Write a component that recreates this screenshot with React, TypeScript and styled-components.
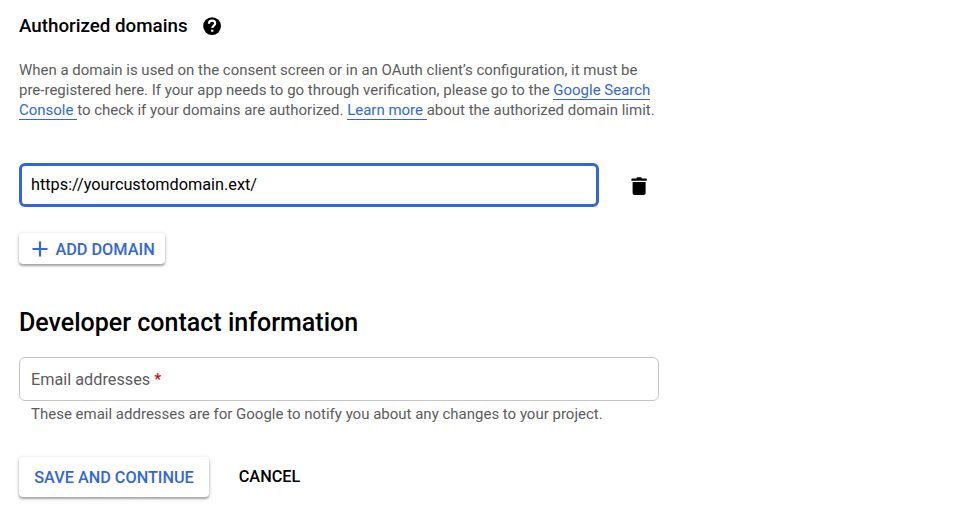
import React from "react";
import styled, { createGlobalStyle } from "styled-components";

const GlobalStyle = createGlobalStyle`
  * { box-sizing: border-box; }
  body { margin: 0; background: #fff; font-family: Roboto, sans-serif; color: #000; }
`;

const Page = styled.main`
  width: 958px;
  height: 518px;
  padding: 14px 19px 0;
  display: flex;
  flex-direction: column;
  align-items: flex-start;
  overflow: hidden;
`;

const SectionHeader = styled.header`
  display: flex;
  align-items: center;
  gap: 13px;
  height: 24px;
`;

const SectionTitle = styled.h3`
  margin: 0;
  font-size: 18.75px;
  font-weight: 500;
  line-height: 24px;
  white-space: nowrap;
`;

const Description = styled.p`
  margin: 22px 0 0;
  font-size: 14.99px;
  line-height: 20px;
  color: #5c5c5c;
  white-space: nowrap;
`;

const TextLink = styled.a`
  color: #3367d6;
  text-decoration: none;
  border-bottom: 1px solid #3367d6;
  white-space: pre;
`;

const DomainRow = styled.div`
  display: flex;
  align-items: center;
  margin-top: 43px;
  gap: 28px;
`;

const DomainInput = styled.input`
  width: 580px;
  height: 44px;
  padding: 0 9px 1px;
  border: 3px solid #3367d6;
  border-radius: 6px;
  outline: none;
  font: 400 16.27px Roboto, sans-serif;
  color: #000;
  background: #fff;
`;

const IconButton = styled.button`
  display: flex;
  padding: 2px 0 0;
  border: 0;
  background: none;
  color: #000;
`;

const Button = styled.button<{ $raised?: boolean; $height: number; $width: number }>`
  display: flex;
  align-items: center;
  justify-content: center;
  width: ${(p) => p.$width}px;
  height: ${(p) => p.$height}px;
  padding: 0;
  border: 0;
  border-radius: 4px;
  background: #fff;
  color: ${(p) => (p.$raised ? "#3367d6" : "#000")};
  box-shadow: ${(p) => (p.$raised ? "0 1px 4px rgba(0,0,0,.2), 0 2px 2px rgba(0,0,0,.26)" : "none")};
  font: 500 16.25px/20px Roboto, sans-serif;
  white-space: nowrap;
`;

const AddButton = styled(Button)`
  justify-content: flex-start;
  margin-top: 26px;
  padding: 2px 0 0 13px;
  gap: 7.4px;
  font-size: 16.3px;
`;

const AddIcon = styled.svg`
  margin-bottom: 1px;
`;

const SaveButton = styled(Button)`
  padding-top: 1px;
`;

const CancelButton = styled(Button)`
  padding-bottom: 1px;
`;

const PageHeading = styled.h2`
  margin: 43px 0 0;
  font-size: 25.03px;
  font-weight: 500;
  line-height: 32px;
`;

const EmailField = styled.label`
  display: flex;
  align-items: center;
  width: 640px;
  height: 44px;
  margin-top: 18px;
  padding: 0 11px;
  border: 1px solid #c4c4c4;
  border-radius: 6px;
  color: #5c5c5c;
  font-size: 16.25px;
`;

const Required = styled.span`
  margin-left: 4px;
  color: #d50000;
`;

const Hint = styled.p`
  margin: 3px 0 0 12px;
  font-size: 15px;
  line-height: 20px;
  color: #5c5c5c;
`;

const Actions = styled.div`
  display: flex;
  margin-top: 33px;
  gap: 29px;
`;

export default function App() {
  return (
    <>
      <GlobalStyle />
      <Page>
        <SectionHeader>
          <SectionTitle>Authorized domains</SectionTitle>
          <svg width="22" height="22" viewBox="0 0 24 24" aria-label="Help">
            <circle cx="12.1" cy="12.1" r="9.7" />
            <path d="M8.7 9.5C8.7 7.4 10 6.1 12.1 6.1s3.4 1.2 3.4 3.1c0 2.2-3.2 2.7-3.2 5.1" fill="none" stroke="#fff" strokeWidth="2.3" />
            <path d="M11.1 16h2.4v2.3h-2.4z" fill="#fff" />
          </svg>
        </SectionHeader>
        <Description>
          When a domain is used on the consent screen or in an OAuth client’s configuration, it must be
          <br />
          pre-registered here. If your app needs to go through verification, please go to the <TextLink>Google Search</TextLink>
          <br />
          <TextLink>{"Console "}</TextLink>to check if your domains are authorized. <TextLink>{"Learn more "}</TextLink>about the authorized domain limit.
        </Description>
        <DomainRow>
          <DomainInput defaultValue="https://yourcustomdomain.ext/" aria-label="Domain" />
          <IconButton aria-label="Delete domain">
            <svg width="24" height="24" viewBox="0 0 24 24">
              <path d="M5.6 7.9h13v11.1c0 1.1-.9 2-2 2h-9c-1.1 0-2-.9-2-2zM5 4.5h4.3c.2-.8.8-1.2 1.6-1.2h2.4c.8 0 1.4.4 1.6 1.2h4.3c.4 0 .6.2.6.6v1.6H4.4V5.1c0-.4.2-.6.6-.6z" />
            </svg>
          </IconButton>
        </DomainRow>
        <AddButton $raised $width={146} $height={31}>
          <AddIcon width="16" height="16" viewBox="0 0 16 16" fill="none" stroke="currentColor" strokeWidth="2.2">
            <path d="M8 .5v15M.5 8h15" />
          </AddIcon>
          ADD DOMAIN
        </AddButton>
        <PageHeading>Developer contact information</PageHeading>
        <EmailField>Email addresses <Required>*</Required></EmailField>
        <Hint>These email addresses are for Google to notify you about any changes to your project.</Hint>
        <Actions>
          <SaveButton $raised $width={190} $height={40}>SAVE AND CONTINUE</SaveButton>
          <CancelButton $width={63} $height={40}>CANCEL</CancelButton>
        </Actions>
      </Page>
    </>
  );
}
